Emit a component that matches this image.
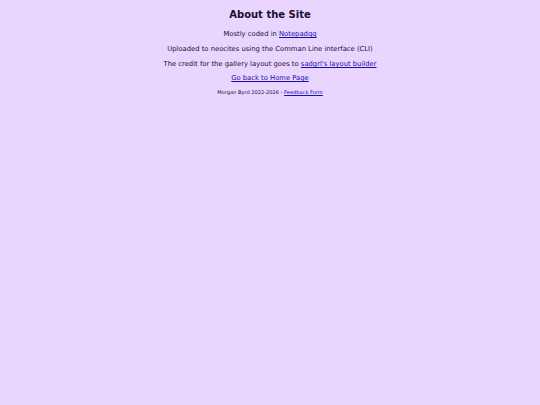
export default function App() {
  return (
    <div className="min-h-[405px] w-full bg-[#e9d5ff] text-[#17102e] text-center font-['DejaVu_Sans',sans-serif]">
      <div className="pt-[7px]">
        <h1 className="text-[10px] font-bold leading-[15px]">About the Site</h1>
        <p className="mt-[7px] text-[6.8px] leading-[10px]">
          Mostly coded in <a href="#" className="text-[#1a0dab] underline">Notepadqq</a>
        </p>
        <p className="mt-[5px] text-[6.8px] leading-[10px]">
          Uploaded to neocites using the Comman Line interface (CLI)
        </p>
        <p className="mt-[5px] text-[6.8px] leading-[10px]">
          The credit for the gallery layout goes to{" "}
          <a href="#" className="text-[#1a0dab] underline">sadgrl's layout builder</a>
        </p>
        <p className="mt-[4px] text-[6.8px] leading-[10px]">
          <a href="#" className="text-[#1a0dab] underline">Go back to Home Page</a>
        </p>
        <p className="mt-[5px] text-[5.1px] leading-[8px]">
          Morgan Byrd 2022-2026 - <a href="#" className="text-[#1a0dab] underline">Feedback Form</a>
        </p>
      </div>
    </div>
  );
}
